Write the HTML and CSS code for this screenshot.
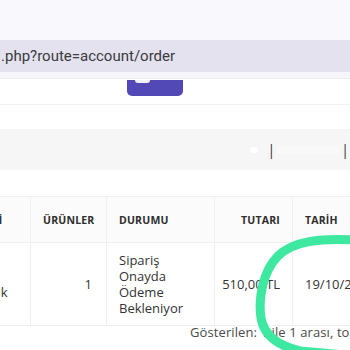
FILE: index.html
```html
<!DOCTYPE html>
<html lang="tr">
<head>
  <meta charset="UTF-8" />
  <title>Sipariş Geçmişi</title>
  <link rel="stylesheet" href="styles.css">
</head>
<body>

  <div class="topbar"></div>
  <div class="urlbar">.php?route=account/order</div>
  <div class="strip"></div>

  <div class="actions">
    <div class="btn-mor"><span class="notch"></span></div>
  </div>

  <div class="pager">
    <span class="blur-dot"></span>
    <span class="cizgi">|</span>
    <span class="blur-bar"></span>
    <span class="cizgi">|</span>
  </div>

  <div class="tablo-kutu">
    <table class="siparisler">
      <thead>
        <tr>
          <th class="c-musteri">MÜŞTERİ</th>
          <th class="c-urun">ÜRÜNLER</th>
          <th class="c-durum">DURUMU</th>
          <th class="c-tutar">TUTARI</th>
          <th class="c-tarih">TARİH</th>
        </tr>
      </thead>
      <tbody>
        <tr>
          <td class="c-musteri">Ece<br>Yanık</td>
          <td class="c-urun">1</td>
          <td class="c-durum">Sipariş<br>Onayda<br>Ödeme<br>Bekleniyor</td>
          <td class="c-tutar">510,00 TL</td>
          <td class="c-tarih">19/10/2024</td>
        </tr>
      </tbody>
    </table>
    <div class="bilgi">Gösterilen: 1 ile 1 arası, toplam 1 (1 Sayfa)</div>
  </div>

  <!-- isaret: elle cizilmis yesil halka -->
  <svg class="halka" width="350" height="350" viewBox="0 0 350 350">
    <path d="M356 240 C320 238 293 241 278 256 C263 271 258 298 261 318 C264 336 279 346 300 351 L356 356"
          fill="none" stroke="#3fe8a0" stroke-width="9" stroke-linecap="round" />
  </svg>

</body>
</html>
```

FILE: styles.css
```css
body {
  margin: 0;
  width: 350px;
  height: 350px;
  overflow: hidden;
  background-color: #ffffff;
  font-family: 'Open Sans', 'Noto Sans', sans-serif;
  color: #333;
  position: relative;
}

.topbar {
  height: 40px;
  background-color: #f9f8fd;
}

.urlbar {
  height: 32px;
  line-height: 32px;
  background-color: #e4e2ee;
  font-family: Roboto, 'Noto Sans', sans-serif;
  font-size: 15px;
  color: #3a3a3f;
  padding-left: 1px;
  white-space: nowrap;
}

.strip {
  height: 6px;
  background-color: #f6f5fa;
  border-bottom: 1px solid #e9e8ee;
}

.actions {
  height: 24px;
  border-bottom: 1px solid #f1f1f1;
  padding-left: 127px;
}

.btn-mor {
  margin-top: 1px;
  width: 56px;
  height: 16px;
  background-color: #5249b6;
  border-radius: 0 0 5px 5px;
  position: relative;
}

.notch {
  position: absolute;
  top: 0;
  left: 8px;
  width: 15px;
  height: 3px;
  background-color: #f3f2f8;
  border-radius: 0 0 6px 6px;
}

.pager {
  margin-top: 24px;
  height: 41px;
  background-color: #f6f6f6;
  display: flex;
  align-items: center;
  justify-content: flex-end;
  padding-right: 1px;
}

.cizgi {
  font-size: 14px;
  color: #333;
}

.blur-dot {
  width: 8px;
  height: 6px;
  border-radius: 3px;
  background-color: #ffffff;
  margin-right: 10px;
}

.blur-bar {
  width: 62px;
  height: 8px;
  background-color: #f9f9f9;
  margin: 0 2px;
}

.tablo-kutu {
  margin-top: 26px;
  margin-left: -84px;
}

.siparisler {
  border-collapse: collapse;
  table-layout: fixed;
  width: 476px;
}

.siparisler th,
.siparisler td {
  box-sizing: border-box;
  border: 1px solid #efefef;
}

.siparisler th {
  height: 46px;
  padding: 0 12px;
  background-color: #fbfbfb;
  font-size: 10.5px;
  font-weight: 700;
  letter-spacing: 0.2px;
  color: #2e2e2e;
}

.siparisler td {
  height: 82px;
  padding: 9px 12px;
  font-size: 13px;
  line-height: 16px;
  color: #333;
  vertical-align: middle;
  white-space: nowrap;
}

.siparisler .c-musteri { width: 114px; text-align: left; }
.siparisler th.c-musteri { padding-left: 38px; }
.siparisler td.c-musteri { padding-left: 58px; }
.siparisler .c-urun { width: 76px; text-align: right; padding-right: 14px; }
.siparisler .c-durum { width: 108px; text-align: left; }
.siparisler .c-tutar { width: 78px; text-align: right; padding-right: 12px; padding-left: 4px; }
.siparisler .c-tarih { width: 100px; text-align: left; }

.bilgi {
  margin-left: 274px;
  margin-top: -1px;
  font-size: 13px;
  line-height: 14px;
  letter-spacing: 0.1px;
  color: #4a4a4a;
  white-space: nowrap;
}

.halka {
  position: absolute;
  top: 0;
  left: 0;
  pointer-events: none;
}
```
